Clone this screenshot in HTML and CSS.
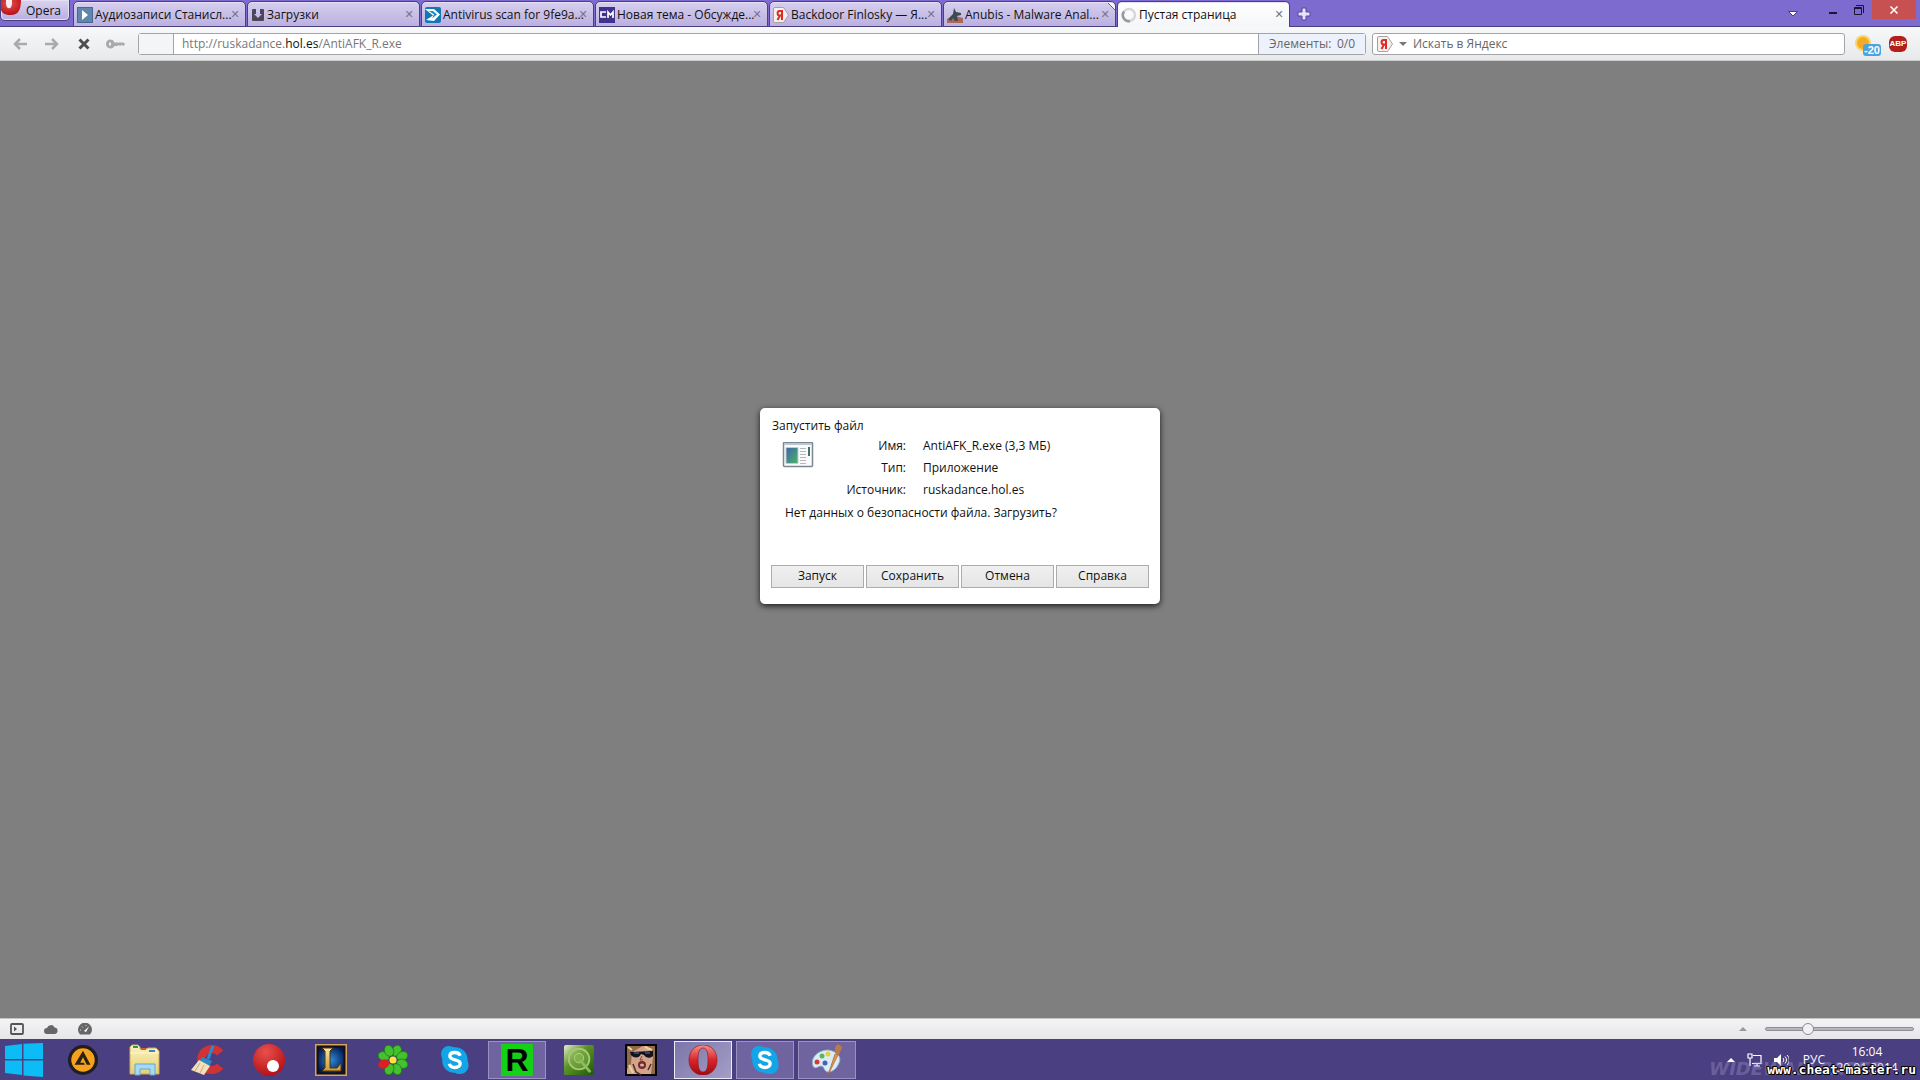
FILE: index.html
```html
<!DOCTYPE html>
<html lang="ru">
<head>
    <meta charset="UTF-8">
    <meta name="viewport" content="width=device-width, initial-scale=1.0">
    <title>Пустая страница</title>
    <link rel="stylesheet" href="styles.css">
</head>
<body>
    <svg class="defs" width="0" height="0" aria-hidden="true">
        <defs>
            <radialGradient id="gRed" cx="40%" cy="25%" r="80%"><stop offset="0" stop-color="#e8504c"/><stop offset="1" stop-color="#b30d14"/></radialGradient>
            <linearGradient id="gOpera" x1="0" y1="0" x2="0" y2="1"><stop offset="0" stop-color="#f4908a"/><stop offset=".5" stop-color="#d8252b"/><stop offset="1" stop-color="#a00a10"/></linearGradient>
            <linearGradient id="gGreen" x1="0" y1="0" x2="1" y2="1"><stop offset="0" stop-color="#e4f0cf"/><stop offset=".4" stop-color="#5f9428"/><stop offset="1" stop-color="#1c5a0a"/></linearGradient>
            <linearGradient id="gFolder" x1="0" y1="0" x2="0" y2="1"><stop offset="0" stop-color="#fbf3bd"/><stop offset="1" stop-color="#e6ce78"/></linearGradient>
            <linearGradient id="gGold" x1="0" y1="0" x2="0" y2="1"><stop offset="0" stop-color="#fbe6a0"/><stop offset="1" stop-color="#cf9a2e"/></linearGradient>
            <radialGradient id="gBlue"><stop offset="0" stop-color="#2a8be0"/><stop offset="1" stop-color="#06194e"/></radialGradient>
            <linearGradient id="gExe" x1="0" y1="0" x2="1" y2="1"><stop offset="0" stop-color="#3d63a8"/><stop offset="1" stop-color="#4bb568"/></linearGradient>
            <symbol id="yandex" viewBox="0 0 16 16">
                <path d="M2 .5h8.500l5 7.500-5 7.500H2A1.500 1.500 0 0 1 .5 14V2A1.500 1.500 0 0 1 2 .5z" fill="#f4f1ee" stroke="#a8a0a4"/>
                <path d="M9 3v10M9 4H6.500C4 4 4 8.500 6.500 8.500H9M7 8.500L4.500 13" fill="none" stroke="#e02a24" stroke-width="2"/>
            </symbol>
            <symbol id="skype" viewBox="0 0 32 32">
                <path d="M9 1c3 0 4.500 1 6 1.500C24 2 30 9 29.500 17c3 6-1 14-8 14-3 0-4-1-5.500-1.500C7 30 1.500 23 2.500 15-1 8 3 1 9 1z" fill="#12a5e8"/>
                <path d="M21.500 11.500C20.500 8.500 17.500 8 15.500 8c-3 0-5 1.500-5 3.800 0 5.400 11 2.700 11 8 0 2.700-2.500 4.200-5.500 4.200-3.500 0-5.500-1.500-6-4" fill="none" stroke="#fff" stroke-width="3.600"/>
            </symbol>
        </defs>
    </svg>

    <header class="tabbar">
        <button class="opera-btn" type="button">
            <svg width="20" height="16" viewBox="0 0 20 16"><path d="M0 0h20c0 10-3 15-10 15C4 15 1 13 0 10z" fill="url(#gRed)"/><path d="M5 0v3c0 7 6 7 6 0V0z" fill="#f7eef4"/></svg>
            Opera
        </button>
        <nav class="tabs">
            <div class="tab">
                <svg width="16" height="16" viewBox="0 0 16 16"><path d="M0 0h16v16H0z" fill="#5f86ae"/><path d="M.5.5h15v15H.5z" fill="none" stroke="#48698c"/><path d="M5 3l6 5-6 5z" fill="#fff"/></svg>
                <a href="#">Аудиозаписи Станисл...</a><button type="button" aria-label="Закрыть"></button>
            </div>
            <div class="tab">
                <svg width="14" height="14" viewBox="0 0 14 14"><path d="M1 2a1 1 0 0 1 1-1h3v5H3l4 4 4-4H9V1h3a1 1 0 0 1 1 1v10a1 1 0 0 1-1 1H2a1 1 0 0 1-1-1z" fill="#4a4658"/></svg>
                <a href="#">Загрузки</a><button type="button" aria-label="Закрыть"></button>
            </div>
            <div class="tab">
                <svg width="16" height="16" viewBox="0 0 16 16"><rect width="16" height="16" rx="2" fill="#1576b4"/><path d="M0 2h9l6 5.500-6 6.500-8-1 7-4.500z" fill="#fff"/><path d="M4 4h4l4 3.500-5 4 2-4z" fill="#1b8bcb"/></svg>
                <a href="#">Antivirus scan for 9fe9a...</a><button type="button" aria-label="Закрыть"></button>
            </div>
            <div class="tab">
                <svg width="16" height="16" viewBox="0 0 16 16"><path d="M0 0h16v16H0z" fill="#41338c"/><path d="M7 5H2v5h5M9 11V5l2.500 3L14 5v6" fill="none" stroke="#fff" stroke-width="1.700"/></svg>
                <a href="#">Новая тема - Обсужде...</a><button type="button" aria-label="Закрыть"></button>
            </div>
            <div class="tab">
                <svg width="16" height="16"><use href="#yandex"/></svg>
                <a href="#">Backdoor Finlosky — Я...</a><button type="button" aria-label="Закрыть"></button>
            </div>
            <div class="tab curled">
                <svg width="16" height="16" viewBox="0 0 16 16"><path d="M0 12l8-3 8 2v5H0z" fill="#a8685a"/><path d="M1 12l5-5 1-6 2 4 5 1v2l-4 1 1 5H8l-2-3-2 3z" fill="#3d4b4c"/></svg>
                <a href="#">Anubis - Malware Anal...</a><button type="button" aria-label="Закрыть"></button>
            </div>
            <div class="tab active">
                <svg width="16" height="16" viewBox="0 0 16 16" fill="none" stroke-width="2.500"><circle cx="8" cy="8" r="6" stroke="#d8d8dc"/><path d="M3 4.500A6 6 0 0 0 9 14" stroke="#97979d"/></svg>
                <a href="#">Пустая страница</a><button type="button" aria-label="Закрыть"></button>
            </div>
        </nav>
        <button class="new-tab" type="button" aria-label="Новая вкладка">
            <svg width="14" height="14" viewBox="0 0 14 14"><path d="M5 1h4v4h4v4H9v4H5V9H1V5h4z" fill="#e6e1f8" stroke="#57489c"/></svg>
        </button>
        <div class="window-buttons">
            <button class="tab-menu" type="button" aria-label="Закрытые вкладки"><svg width="10" height="6" viewBox="0 0 10 6"><path d="M.5.5h9L5 5z" fill="#fff" stroke="#4b3d8e"/></svg></button>
            <button type="button" aria-label="Свернуть"><svg width="10" height="10" viewBox="0 0 10 10"><path d="M1 7h8v2H1z" fill="#1a1533"/></svg></button>
            <button type="button" aria-label="Развернуть"><svg width="10" height="10" viewBox="0 0 10 10" fill="none" stroke="#1a1533"><path d="M.5 2.500h7v7h-7zM.5 3.500h7M2 .5h7.500V8"/></svg></button>
            <button class="close" type="button" aria-label="Закрыть"><svg width="10" height="10" viewBox="0 0 10 10"><path d="M1.500 1.500l7 7M8.500 1.500l-7 7" stroke="#fff" stroke-width="1.600"/></svg></button>
        </div>
    </header>

    <div class="toolbar">
        <button class="nav-btn" type="button" aria-label="Назад"><svg width="14" height="12" viewBox="0 0 14 12"><path d="M7 1L2 6l5 5M2 6h12" fill="none" stroke="#aaa" stroke-width="2.500"/></svg></button>
        <button class="nav-btn" type="button" aria-label="Вперёд"><svg width="14" height="12" viewBox="0 0 14 12"><path d="M7 1l5 5-5 5M12 6H0" fill="none" stroke="#aaa" stroke-width="2.500"/></svg></button>
        <button class="nav-btn" type="button" aria-label="Остановить"><svg width="12" height="12" viewBox="0 0 12 12"><path d="M1.500 1.500l9 9M10.500 1.500l-9 9" stroke="#4d4d4d" stroke-width="3"/></svg></button>
        <button class="nav-btn" type="button" aria-label="Пароли"><svg width="20" height="10" viewBox="0 0 20 10"><path d="M4.500.5a4.500 4.500 0 1 0 4 6.500h3l1-1 1.500 1 1.500-1 2 1L19 5l-1.500-1.500h-9A4.500 4.500 0 0 0 4.500.5zM3 3.500h2v3H3z" fill="#aaa" fill-rule="evenodd"/></svg></button>
        <div class="address">
            <div class="badge"></div>
            <a class="url" href="#">http://ruskadance.<b>hol.es</b>/AntiAFK_R.exe</a>
            <div class="progress"><span>Элементы:</span><span>0/0</span></div>
        </div>
        <form class="search">
            <svg width="16" height="16"><use href="#yandex"/></svg>
            <svg width="8" height="4" viewBox="0 0 8 4"><path d="M0 0h8L4 4z" fill="#777"/></svg>
            <input type="text" placeholder="Искать в Яндекс" aria-label="Искать в Яндекс">
        </form>
        <button class="weather" type="button" aria-label="Погода">
            <svg width="18" height="18" viewBox="0 0 18 18"><circle cx="8" cy="8" r="8" fill="#fbd56c"/><circle cx="8" cy="8" r="6" fill="#f4ac22"/></svg>
            <span>-20</span>
        </button>
        <button class="abp" type="button">ABP</button>
    </div>

    <main class="page">
        <section class="dialog" role="dialog" aria-labelledby="dialog-title">
            <h1 id="dialog-title">Запустить файл</h1>
            <div class="file">
                <svg width="32" height="26" viewBox="0 0 32 26"><rect x="1.500" y=".5" width="29" height="24" rx="1" fill="#fbfbfb" stroke="#7b8792" stroke-width="1.500"/><path d="M2 2h28" stroke="#bcc6cf" stroke-width="2"/><path d="M4 5.500h12v16H4z" fill="url(#gExe)" stroke="#c5ccd0"/><path d="M18 6.500h6M18 9.500h6M18 12.500h6M18 15.500h6M18 18.500h6M18 21.500h6" stroke="#b5b9bd"/><path d="M27 5v9" stroke="#3e7467" stroke-width="2"/></svg>
                <dl>
                    <dt>Имя:</dt><dd>AntiAFK_R.exe (3,3 МБ)</dd>
                    <dt>Тип:</dt><dd>Приложение</dd>
                    <dt>Источник:</dt><dd>ruskadance.hol.es</dd>
                </dl>
            </div>
            <p>Нет данных о безопасности файла. Загрузить?</p>
            <div class="dialog-buttons">
                <button type="button">Запуск</button>
                <button type="button">Сохранить</button>
                <button type="button">Отмена</button>
                <button type="button">Справка</button>
            </div>
        </section>
    </main>

    <div class="statusbar">
        <button type="button" aria-label="Панели"><svg width="14" height="12" viewBox="0 0 14 12"><rect x="1" y="1" width="12" height="10" rx="1" fill="none" stroke="#555" stroke-width="1.800"/><path d="M4 3.500L7 6 4 8.500z" fill="#555"/></svg></button>
        <button type="button" aria-label="Opera Link"><svg width="14" height="10" viewBox="0 0 14 10"><path d="M3 10a3 3 0 0 1 0-6 4 4 0 0 1 7.500-.5A3.300 3.300 0 0 1 11 10z" fill="#666"/></svg></button>
        <button type="button" aria-label="Opera Turbo"><svg width="14" height="12" viewBox="0 0 14 12"><path d="M2 11.500A7 7 0 1 1 12 11.500z" fill="#666"/><path d="M6 8l5-4.500L8 9z" fill="#fff"/><path d="M2 7h1M4 3.500l1 1M8 2v1" stroke="#ddd"/></svg></button>
        <div class="zoom">
            <svg width="8" height="4" viewBox="0 0 8 4"><path d="M0 4h8L4 0z" fill="#999"/></svg>
            <input type="range" min="0" max="100" value="27" aria-label="Масштаб">
        </div>
    </div>

    <footer class="taskbar">
        <button class="start" type="button" aria-label="Пуск"><svg width="38" height="34" viewBox="0 0 38 34" fill="#0cbcf6"><path d="M0 3l17-2v15H0zM18.500.8L38 0v16H18.500zM0 17.500h17V32L0 30zM18.500 17.500H38V34l-19.500-1.500z"/></svg></button>
        <button class="task" type="button" aria-label="AIMP"><svg width="30" height="30" viewBox="0 0 32 32"><circle cx="16" cy="16" r="16" fill="#211d20"/><circle cx="16" cy="16" r="12.500" fill="#f7a21c"/><path d="M16 6l8 15h-4l-4-8-3 6h4l1 2H7z" fill="#2a2118"/></svg></button>
        <button class="task" type="button" aria-label="Проводник"><svg width="34" height="32" viewBox="0 0 34 32"><path d="M2 3l2-2h6l2 2v2h6l2-1h8l3 3v23H2z" fill="url(#gFolder)" stroke="#c8ac59"/><path d="M5 3h5" stroke="#23a045" stroke-width="2"/><path d="M13 5h5" stroke="#d65a2e" stroke-width="2"/><path d="M21 7h6" stroke="#3f7fce" stroke-width="2"/><path d="M2 9h29" stroke="#fff8cf"/><path d="M7 20h20v11h-5v-6H12v6H7z" fill="#a5daf3" stroke="#64a7cf"/></svg></button>
        <button class="task" type="button" aria-label="CCleaner"><svg width="34" height="32" viewBox="0 0 34 32"><path d="M30 9A10.500 10.500 0 1 0 30 22" fill="none" stroke="#cf3336" stroke-width="8"/><path d="M23 2l-5 13" stroke="#2a8bcf" stroke-width="3"/><path d="M12 13l10 4-3 6-11-4z" fill="#3387be"/><path d="M9 16l11 6-6 9L1 26z" fill="#f3dfbc"/><path d="M10 19l-5 8M14 21l-4 8" stroke="#c7a97c"/></svg></button>
        <button class="task" type="button" aria-label="Запись экрана"><svg width="32" height="32" viewBox="0 0 32 32"><circle cx="16" cy="16" r="16" fill="url(#gRed)"/><circle cx="20" cy="22" r="6" fill="#fff"/></svg></button>
        <button class="task" type="button" aria-label="League of Legends"><svg width="32" height="32" viewBox="0 0 32 32"><path d="M1 1h30v30H1z" fill="url(#gBlue)" stroke="#d4a558" stroke-width="2"/><path d="M2.500 2.500h27v27h-27z" fill="none" stroke="#150e14" stroke-width="2"/><path d="M7 4h11l-3 3v17h7l4-5v8H7l3-3V7z" fill="url(#gGold)" stroke="#50340c"/></svg></button>
        <button class="task" type="button" aria-label="ICQ"><svg width="32" height="32" viewBox="0 0 32 32"><g fill="#45c02e" stroke="#167c10" stroke-width=".7"><ellipse cx="16" cy="6" rx="4.500" ry="5.700" transform="rotate(22 16 16)"/><ellipse cx="16" cy="6" rx="4.500" ry="5.700" transform="rotate(67 16 16)"/><ellipse cx="16" cy="6" rx="4.500" ry="5.700" transform="rotate(112 16 16)"/><ellipse cx="16" cy="6" rx="4.500" ry="5.700" transform="rotate(157 16 16)"/><ellipse cx="16" cy="6" rx="4.500" ry="5.700" transform="rotate(202 16 16)"/><ellipse cx="16" cy="6" rx="4.500" ry="5.700" transform="rotate(292 16 16)"/><ellipse cx="16" cy="6" rx="4.500" ry="5.700" transform="rotate(337 16 16)"/></g><ellipse cx="16" cy="6" rx="4.500" ry="5.700" transform="rotate(247 16 16)" fill="#dc1f22"/><circle cx="16" cy="16" r="3.500" fill="#ffe23b"/></svg></button>
        <button class="task" type="button" aria-label="Skype"><svg width="30" height="30"><use href="#skype"/></svg></button>
        <button class="task open" type="button" aria-label="R"><span class="r-icon">R</span></button>
        <button class="task" type="button" aria-label="Qip"><svg width="30" height="30" viewBox="0 0 32 32"><rect width="32" height="32" rx="2" fill="url(#gGreen)"/><circle cx="16" cy="15" r="11" fill="#a9cf78" fill-opacity=".3" stroke="#a5c870" stroke-width="2"/><circle cx="16" cy="14" r="5" fill="#8fbf56" fill-opacity=".5" stroke="#b3d382"/><path d="M17 16l11 13" stroke="#8fba5c" stroke-width="3"/></svg></button>
        <button class="task" type="button" aria-label="GTA"><svg width="32" height="32" viewBox="0 0 32 32"><path d="M1 1h30v30H1z" fill="#d3a48a" stroke="#080505" stroke-width="2"/><path d="M2 2h16L7 8 6 20l-4 5zM22 2h8v28h-4l2-17z" fill="#8f6b49"/><path d="M3 3l4 3M20 3l7 3M4 21l4 8" stroke="#ead3a1" stroke-width="2"/><path d="M5 8l23-1v5c-3 3-7 2-9-1l-3-1c-2 5-8 4-10 1z" fill="#101420"/><path d="M9 9h5M20 9h5" stroke="#69778c"/><path d="M17 12l-2 4h3" fill="none" stroke="#7c4a3d"/><ellipse cx="17" cy="21" rx="4" ry="4" fill="#742a2c"/><ellipse cx="17" cy="21" rx="2" ry="1.500" fill="#e3b0a4"/><path d="M8 20l3 8 5 3M23 26l3-6" fill="none" stroke="#4a2d23" stroke-width="1.500"/></svg></button>
        <button class="task open current" type="button" aria-label="Opera"><svg width="30" height="30" viewBox="0 0 30 30"><path d="M15 0C6 0 1 7 1 15s5 15 14 15 14-7 14-15S24 0 15 0zm0 3c4 0 5 5 5 12s-1 12-5 12-5-5-5-12 1-12 5-12z" fill="url(#gOpera)" stroke="#9c161a" stroke-width=".7"/></svg></button>
        <button class="task open" type="button" aria-label="Skype"><svg width="30" height="30"><use href="#skype"/></svg></button>
        <button class="task open" type="button" aria-label="Paint"><svg width="32" height="32" viewBox="0 0 32 32"><path d="M2 22C-1 13 8 6 17 6c9 1 14 7 11 13-2 5-6 9-11 9-5-1-3-6-7-6-3 0-6 4-8 0z" fill="#dcecf6" stroke="#8fb3cc"/><circle cx="11" cy="12" r="2.500" fill="#5fb754"/><circle cx="6" cy="18" r="2.500" fill="#d23b36"/><circle cx="17" cy="10" r="2.500" fill="#e6cf40"/><circle cx="14" cy="19" r="2.500" fill="#4363b6"/><path d="M17 31l7-21 3 1z" fill="#e19a4c" stroke="#a7632a" stroke-width=".7"/><path d="M24 9c-1-4 0-7 3-9 2 1 4 2 4 4-1 2-2 4-3 7z" fill="#b77a4a"/></svg></button>
        <div class="tray">
            <svg width="8" height="4" viewBox="0 0 8 4"><path d="M0 4h8L4 0z" fill="#fff"/></svg>
            <svg width="15" height="14" viewBox="0 0 15 14" fill="none" stroke="#fff" stroke-width="1.200"><path d="M6 2.500h8v8H5M7 13h6M10 11v2M1 1h4v4H1zM3 5v8"/></svg>
            <svg width="15" height="12" viewBox="0 0 15 12" fill="none" stroke="#fff"><path d="M0 4h3l4-4v12L3 8H0z" fill="#fff" stroke="none"/><path d="M9 4c1 1 1 3 0 4M11 2.500c2 2 2 5 0 7M13 1c3 3 3 7 0 10"/></svg>
            <span class="lang">РУС</span>
            <div class="clock"><time>16:04</time><span>20.01.2014</span></div>
        </div>
        <div class="wallpaper-name">WIDEWALLPAPER</div>
        <div class="site-mark">www.cheat-master.ru</div>
    </footer>
</body>
</html>
```
FILE: styles.css
```css
* {
  box-sizing: border-box;
  margin: 0;
  padding: 0;
}

body {
  --violet: #7d6bcf;
  --violet-dark: #4a3f7f;
  --grey: #7f7f7f;
  --line: #a3a3a8;

  display: flex;
  flex-direction: column;
  height: 100vh;
  overflow: hidden;
  background: var(--grey);
  color: #111;
  font: 12px/16px "Open Sans", "Noto Sans", sans-serif;
}

button,
input {
  font: inherit;
  color: inherit;
  border: 0;
  background: none;
}

a {
  color: inherit;
  text-decoration: none;
}

svg {
  display: block;
  flex: none;
}

.defs {
  position: absolute;
}

/* Вкладки */
.tabbar {
  display: flex;
  align-items: flex-start;
  height: 27px;
  background: var(--violet);
  border-bottom: 1px solid var(--violet-dark);
}

.opera-btn {
  display: flex;
  gap: 5px;
  width: 70px;
  height: 21px;
  line-height: 21px;
  background: linear-gradient(#d9d3ee, #b9aee0);
  border: 1px solid var(--violet-dark);
  border-top: 0;
  border-radius: 0 0 5px 5px;
  box-shadow: inset 0 0 0 1px #e4dff5;
}

.tabs {
  display: flex;
  gap: 1px;
  padding: 1px 0 0 3px;
  height: 27px;
}

.tab {
  display: flex;
  align-items: center;
  gap: 2px;
  width: 173px;
  height: 26px;
  padding: 1px 4px 0 3px;
  background: linear-gradient(#d6cfee, #bbb0e0);
  border: 1px solid var(--violet-dark);
  border-radius: 5px 5px 0 0;
  box-shadow: inset 0 1px 0 #e6e1f5;
}

.tab a {
  flex: 1;
  min-width: 0;
  white-space: nowrap;
}

.tab button {
  width: 12px;
  height: 16px;
}

.tab button::before {
  content: "✕";
  display: block;
  font: bold 11px/16px "DejaVu Sans", sans-serif;
  color: #77738a;
}

.tab.curled {
  background: linear-gradient(225deg, #f8f8fa 5px, #6b5f95 5px 6px, transparent 6px), linear-gradient(#d6cfee, #bbb0e0);
}

.tab.active {
  background: linear-gradient(#fff, #f5f6f8);
  border-bottom: 0;
}

.new-tab {
  padding: 7px;
}

.window-buttons {
  display: flex;
  align-items: flex-start;
  margin-left: auto;
  padding-right: 4px;
}

.window-buttons button {
  display: flex;
  justify-content: center;
  align-items: center;
  width: 26px;
  height: 19px;
}

.window-buttons .tab-menu {
  width: 54px;
  height: 28px;
}

.window-buttons .close {
  width: 44px;
  background: #c75050;
}

/* Адресная строка */
.toolbar {
  display: flex;
  align-items: center;
  height: 34px;
  padding: 0 13px 0 4px;
  background: linear-gradient(#f7f8fa, #e8e9ea);
  border-bottom: 1px solid #ccc;
  color: #666;
}

.nav-btn {
  display: flex;
  justify-content: center;
  width: 32px;
}

.address,
.search {
  display: flex;
  align-items: center;
  height: 22px;
  background: #fff;
  border: 1px solid var(--line);
  border-radius: 3px;
}

.address {
  flex: 1;
  margin: 0 6px;
}

.badge {
  width: 35px;
  height: 20px;
  background: #f4f5f6;
  border-right: 1px solid var(--line);
}

.url {
  flex: 1;
  padding-left: 8px;
  color: #777;
}

.url b {
  font-weight: normal;
  color: #111;
}

.progress {
  display: flex;
  justify-content: space-between;
  width: 107px;
  padding: 0 10px;
  line-height: 20px;
  background: #edf1fb;
  border-left: 1px solid var(--line);
}

.search {
  width: 473px;
  padding-left: 4px;
  gap: 6px;
}

.search input {
  flex: 1;
  outline: none;
}

.search input::placeholder {
  color: #666;
  opacity: 1;
}

.weather {
  position: relative;
  width: 26px;
  height: 20px;
  margin: 0 8px 0 10px;
}

.weather span {
  position: absolute;
  right: 0;
  bottom: -2px;
  padding: 0 1px;
  background: #4ba3df;
  border-radius: 3px;
  color: #fff;
  font: bold 11px/12px "Liberation Sans", sans-serif;
}

.abp {
  width: 18px;
  height: 16px;
  background: #b3201c;
  border-radius: 6px;
  color: #fff;
  font: bold 8px/16px "Liberation Sans", sans-serif;
}

/* Страница */
.page {
  flex: 1;
  display: flex;
  justify-content: center;
  align-items: center;
  padding-bottom: 68px;
}

.dialog {
  width: 400px;
  padding: 10px 11px 16px;
  background: #fff;
  border-radius: 5px;
  box-shadow: 0 2px 6px rgba(0, 0, 0, 0.8);
}

.dialog h1 {
  padding-left: 1px;
  font-size: 12px;
  font-weight: normal;
}

.file {
  display: flex;
  padding: 1px 0 0 11px;
}

.file svg {
  margin-top: 7px;
}

.file dl {
  display: grid;
  grid-template-columns: 92px 1fr;
  gap: 0 17px;
  line-height: 22px;
}

.file dt {
  text-align: right;
}

.dialog p {
  padding: 4px 0 0 14px;
}

.dialog-buttons {
  display: grid;
  grid-template-columns: repeat(4, 1fr);
  gap: 2px;
  padding-top: 44px;
}

.dialog-buttons button {
  height: 23px;
  background: linear-gradient(#f0f0f0, #e5e5e5);
  border: 1px solid #acacac;
}

/* Строка состояния */
.statusbar {
  display: flex;
  align-items: center;
  height: 21px;
  padding: 0 6px 0 0;
  background: linear-gradient(#f4f4f5, #e6e6ea);
  border-top: 1px solid #c4c4c4;
}

.statusbar button {
  display: flex;
  justify-content: center;
  width: 34px;
}

.zoom {
  display: flex;
  align-items: center;
  gap: 18px;
  margin-left: auto;
}

.zoom input {
  width: 149px;
  height: 14px;
  appearance: none;
}

.zoom input::-webkit-slider-runnable-track {
  height: 4px;
  background: #b5b5bb;
  border: 1px solid #8f8f94;
  border-radius: 2px;
}

.zoom input::-webkit-slider-thumb {
  appearance: none;
  width: 12px;
  height: 12px;
  margin-top: -5px;
  background: #f2f2f4;
  border: 1px solid #8a8a90;
  border-radius: 50%;
}

/* Панель задач */
.taskbar {
  position: relative;
  display: flex;
  align-items: center;
  gap: 4px;
  height: 41px;
  background: #4a3f80;
}

.start {
  width: 50px;
  padding-left: 5px;
}

.task {
  display: flex;
  justify-content: center;
  align-items: center;
  width: 58px;
  height: 38px;
}

.task.open {
  background: #7064a0;
  border: 1px solid #9b92bf;
}

.task.current {
  background: linear-gradient(135deg, #7c75ab, #a39fc5);
  border-color: #eceaf5;
}

.r-icon {
  width: 32px;
  height: 32px;
  background: #14d016;
  color: #000;
  font: bold 32px/32px "Liberation Sans", sans-serif;
}

.tray {
  display: flex;
  align-items: center;
  gap: 12px;
  margin-left: auto;
  padding-right: 25px;
  color: #fff;
}

.lang {
  padding: 0 2px;
}

.clock {
  display: flex;
  flex-direction: column;
  align-items: center;
  width: 56px;
}

.wallpaper-name,
.site-mark {
  position: absolute;
  bottom: 2px;
  white-space: nowrap;
}

.wallpaper-name {
  right: 36px;
  color: rgba(160, 150, 205, 0.4);
  font: italic bold 18px/18px "DejaVu Sans", sans-serif;
}

.site-mark {
  right: 4px;
  color: #fff;
  font: bold 13px/16px "DejaVu Sans Mono", monospace;
  text-shadow: 1px 0 #000, -1px 0 #000, 0 1px #000, 0 -1px #000, 1px 1px #000, -1px -1px #000;
}
```
